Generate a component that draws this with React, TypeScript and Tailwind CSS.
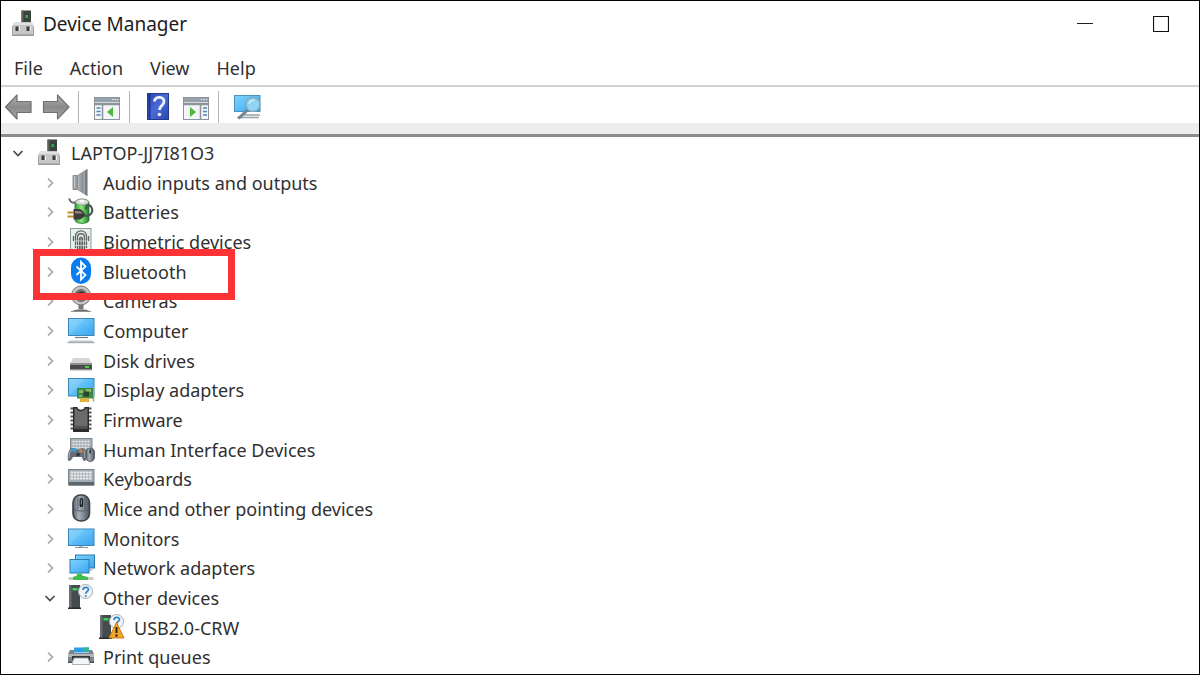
import { useState, type ReactNode } from "react";

function Icon({ children }: { children: ReactNode }) {
  return (
    <svg viewBox="0 0 28 28" className="size-7 shrink-0 overflow-visible" aria-hidden="true">
      {children}
    </svg>
  );
}

function Gradients() {
  return (
    <svg className="absolute size-0" aria-hidden="true">
      <defs>
        <linearGradient id="screen" x1="0" y1="0" x2="1" y2="1">
          <stop offset="0" stopColor="#7fd0fb" />
          <stop offset="0.5" stopColor="#5dbdf8" />
          <stop offset="1" stopColor="#36a3f0" />
        </linearGradient>
        <linearGradient id="cone" x1="0" y1="0" x2="1" y2="0">
          <stop offset="0" stopColor="#b4b9bd" />
          <stop offset="0.55" stopColor="#8c9196" />
          <stop offset="1" stopColor="#c3c7ca" />
        </linearGradient>
        <linearGradient id="arrow" x1="0" y1="0" x2="0" y2="1">
          <stop offset="0" stopColor="#b4b4b4" />
          <stop offset="0.5" stopColor="#8a8a8a" />
          <stop offset="1" stopColor="#a6a6a6" />
        </linearGradient>
        <linearGradient id="book" x1="0" y1="0" x2="1" y2="1">
          <stop offset="0" stopColor="#2a47b4" />
          <stop offset="0.5" stopColor="#4a6bd6" />
          <stop offset="1" stopColor="#2743ae" />
        </linearGradient>
        <linearGradient id="cell" x1="0" y1="0" x2="1" y2="0">
          <stop offset="0" stopColor="#2f9e35" />
          <stop offset="0.45" stopColor="#8be57c" />
          <stop offset="1" stopColor="#1c7d2a" />
        </linearGradient>
        <linearGradient id="mouse" x1="0" y1="0" x2="1" y2="0">
          <stop offset="0" stopColor="#56606b" />
          <stop offset="0.35" stopColor="#a6b1bc" />
          <stop offset="1" stopColor="#4d5660" />
        </linearGradient>
      </defs>
    </svg>
  );
}

function DeviceIcon() {
  return (
    <Icon>
      <rect x="12.5" y="0.5" width="9.5" height="12" fill="#3a423d" />
      <rect x="12.5" y="0.5" width="2" height="12" fill="#5c625e" />
      <rect x="16.5" y="5" width="2.5" height="3" fill="#2fae4b" />
      <path d="M5 12.5h18l2 4V26H3v-9.5z" fill="#c6c6c6" />
      <path d="M5 12.5h18l1 2.5H4z" fill="#e2e2e2" />
      <path d="M3 24.5h22V26H3z" fill="#999" />
      <path d="M3.5 16.5V25M24.5 16.5V25" stroke="#a4a4a4" />
      <rect x="6.5" y="16.5" width="3" height="4.500" fill="#3d3d3d" />
      <rect x="17.5" y="16.5" width="3" height="4.500" fill="#3d3d3d" />
      <path d="M10.5 16.5v4.5M21.5 16.5v4.5" stroke="#f2f2f2" />
    </Icon>
  );
}

function AudioIcon() {
  return (
    <Icon>
      <path d="M6 6.500h4.500v14H6z" fill="#9a9ea2" stroke="#74787b" strokeWidth="0.8" />
      <path d="M10.500 6.500 20 0.500v26L10.500 20.500z" fill="url(#cone)" stroke="#85898c" strokeWidth="0.8" />
      <path d="M18 1.800 20.500 0v27L18 25.200z" fill="#777c80" />
      <path d="M20.500 0v27" fill="none" stroke="#b6babd" strokeWidth="0.8" />
      <path d="M7.500 7.500v12" stroke="#c9cdd0" />
    </Icon>
  );
}

function BatteryIcon() {
  return (
    <Icon>
      <path d="M2 0.500c2 5 5 5 8 3" fill="none" stroke="#6b6175" strokeWidth="2" />
      <path d="M8 4.500C8 0 22 0 22 4.500V22c0 4.500-14 4.500-14 0z" fill="url(#cell)" stroke="#25702b" strokeWidth="0.8" />
      <ellipse cx="15" cy="4" rx="6.500" ry="3" fill="#d9ded9" stroke="#8a938b" strokeWidth="0.7" />
      <ellipse cx="15" cy="3" rx="2.500" ry="1.300" fill="#fafafa" />
      <path d="M16 17c8 3 11-4 8-8.500-2.500-3-6-.5-4.500 3" fill="none" stroke="#4e5654" strokeWidth="2.200" />
      <path d="M0.500 14.500h6M0.500 18.500h6" stroke="#c08c2b" strokeWidth="2.200" />
      <path d="M6.500 11h4c4 0 6 2 7.500 5.500-1.500 3.500-3.500 5-7.500 5h-4z" fill="#3d3a39" />
      <path d="M8 13h3c2.500 0 4 1 5 2.500H8z" fill="#8b8683" />
    </Icon>
  );
}

function FingerprintIcon() {
  return (
    <Icon>
      <rect x="3.500" y="0.500" width="20.500" height="26" fill="#e5eeee" stroke="#8b9b99" />
      <g fill="none" stroke="#5f6463" strokeWidth="1.300">
        <path d="M8.500 20V8.500C8.500 1 19.500 1 19.500 8.500V20" />
        <path d="M10.500 22V9.500c0-5 7-5 7 0V22" />
        <path d="M12.500 23V11c0-2.500 3-2.500 3 0v12" />
        <path d="M14 10v14" />
        <path d="M6.500 13V8" />
        <path d="M21.500 13V8" />
      </g>
      <path d="M7 13h14M7 17.500h14" stroke="#e5eeee" strokeWidth="0.7" />
    </Icon>
  );
}

function BluetoothIcon() {
  return (
    <Icon>
      <rect x="4" y="-0.500" width="20" height="26.500" rx="10" fill="#0a7cf2" />
      <path d="m9.500 8.500 9 8.500-4.500 4.500v-17.500l4.500 4.500-9 8.500" fill="none" stroke="#fff" strokeWidth="1.800" />
    </Icon>
  );
}

function CameraIcon() {
  return (
    <Icon>
      <path d="M11.500 17h5v5h-5z" fill="#777" />
      <path d="M5 24.500c3-3 15-3 18 0z" fill="#6e6e6e" />
      <path d="M4 24.500h20" stroke="#8f8f8f" />
      <circle cx="14" cy="8.500" r="9.500" fill="#c5c5c5" stroke="#777" />
      <circle cx="14" cy="8.500" r="6.500" fill="#737378" />
      <circle cx="14" cy="8.500" r="4" fill="#303038" />
      <circle cx="12.500" cy="7" r="1.200" fill="#9ab" />
    </Icon>
  );
}

function ComputerIcon() {
  return (
    <Icon>
      <rect x="1.500" y="1.500" width="25.500" height="17" fill="url(#screen)" stroke="#3b87b8" />
      <path d="M2 18V2h16z" fill="#fff" opacity="0.12" />
      <path d="M8 20.500h13" stroke="#6e7c88" strokeWidth="1.200" />
      <path d="M2.500 23.500h23l2 2.200H0.500z" fill="#bfc4c8" />
      <path d="M0.500 25.700h27" stroke="#8e959b" strokeWidth="0.8" />
    </Icon>
  );
}

function DiskIcon() {
  return (
    <Icon>
      <path d="M6 11h16l3 6H3z" fill="#d5d5d5" />
      <path d="M3 16.500h22V23H3z" fill="#4a4a4a" />
      <path d="M3 16.500h22v1.500H3z" fill="#8f8f8f" />
      <path d="M3 22.200h22v1.300H3z" fill="#a5a5a5" />
      <rect x="18" y="19" width="4" height="2" fill="#3fd83a" />
    </Icon>
  );
}

function DisplayIcon() {
  return (
    <Icon>
      <rect x="1.500" y="2.500" width="25.500" height="17.500" fill="url(#screen)" stroke="#3b87b8" />
      <path d="M2 19.500V3h16z" fill="#fff" opacity="0.12" />
      <path d="M26.500 10v15.500" stroke="#9aa0a3" strokeWidth="1.500" />
      <path d="M10 12h16v10.500H10z" fill="#3d8a45" />
      <path d="M12 14h4v3h-4zM19 13h5v3h-5zM12 19h3v2h-3z" fill="#8bb765" />
      <path d="M16.500 15.500h5.500v5h-5.500z" fill="#26472c" />
      <path d="M13 22.500h9V26h-9z" fill="#e2a925" />
      <path d="M15.500 22.500V26M18 22.500V26M20 22.500V26" stroke="#f5cf6b" strokeWidth="0.6" />
    </Icon>
  );
}

function FirmwareIcon() {
  return (
    <Icon>
      <path d="M3.500 2.500h4M3.500 6.500h4M3.500 10.500h4M3.500 14.500h4M3.500 18.500h4M3.500 22.500h4M20.500 2.500h4M20.500 6.500h4M20.500 10.500h4M20.500 14.500h4M20.500 18.500h4M20.500 22.500h4" stroke="#555" strokeWidth="2.200" />
      <path d="M6 1h4.500c0 3.500 7 3.500 7 0H22v25H6z" fill="#2c2c2c" />
      <path d="M7.500 2.500h2c1.500 3.500 7.500 3.500 9 0h2V22h-13z" fill="#6b6b6b" />
      <path d="M7.500 20h13v3h-13z" fill="#505050" />
    </Icon>
  );
}

function HidIcon() {
  return (
    <Icon>
      <rect x="3.500" y="2.500" width="21.500" height="12.500" fill="#a7b0b5" stroke="#7f8a91" />
      <path d="M5.500 5.500h17.500M5.500 8.500h17.500M5.500 11.500h17.500" stroke="#e9edef" strokeWidth="1.600" strokeDasharray="2 1" />
      <path d="M1 24c-1-5 1-12 4-12l3 1.500h4l3-1.500c4 0 5 7 4 12-1 2-3 1.500-4-3H6c-2 4-4 5-5 3z" fill="#676e75" />
      <path d="M2 22c0-4 1-8 3-8M17 15c1 2 1 5 1 7" fill="none" stroke="#b4bbc1" />
      <circle cx="7" cy="14" r="2.200" fill="#359bdf" />
      <circle cx="14" cy="15" r="1.800" fill="#c98656" />
      <circle cx="11" cy="18.500" r="1.800" fill="#303439" />
      <rect x="19" y="12" width="8.500" height="13.500" rx="4.200" fill="url(#mouse)" stroke="#414950" strokeWidth="0.8" />
      <path d="M23.200 13.500v4" stroke="#2b3137" strokeWidth="1.500" />
    </Icon>
  );
}

function KeyboardIcon() {
  return (
    <Icon>
      <rect x="1.500" y="4.500" width="25.500" height="15.500" fill="#a5acb1" stroke="#79838a" />
      <path d="M3.500 7.500h21.500M3.500 10.500h21.500M3.500 13.500h21.500" stroke="#e9ecee" strokeWidth="2" strokeDasharray="2.500 0.600" />
      <path d="M2 17h25v3.500H2z" fill="#5d666d" />
    </Icon>
  );
}

function MouseIcon() {
  return (
    <Icon>
      <rect x="6" y="0" width="16.500" height="26" rx="7.500" fill="url(#mouse)" stroke="#3b4148" strokeWidth="1.600" />
      <path d="M7 14.500c5 2 10 2 15 0M11 2v12M18 2v12" fill="none" stroke="#555e67" />
      <rect x="12.600" y="3" width="3.500" height="9" rx="1.500" fill="#20252a" />
      <path d="M14.300 4.500v5" stroke="#8593a0" />
    </Icon>
  );
}

function MonitorIcon() {
  return (
    <Icon>
      <rect x="1.500" y="4" width="25.500" height="16.500" fill="url(#screen)" stroke="#3b87b8" />
      <path d="M2 20V4.500h16z" fill="#fff" opacity="0.12" />
      <path d="M12 21h4v1h-4z" fill="#aab4bb" />
      <path d="M8 22.500h13" stroke="#8a959d" />
    </Icon>
  );
}

function NetworkIcon() {
  return (
    <Icon>
      <rect x="8.500" y="1" width="19" height="13" fill="url(#screen)" stroke="#2f7cac" />
      <path d="M22.500 16h3" stroke="#8a959d" />
      <rect x="3" y="5.500" width="19" height="13.500" fill="url(#screen)" stroke="#2f7cac" />
      <path d="M1.500 24.500h25" stroke="#c6cbc8" strokeWidth="3" />
      <path d="M10 19.500h5v2l6 1.500v3H6v-3l4-1.500z" fill="#41bd4c" />
    </Icon>
  );
}

function Tower() {
  return (
    <>
      <path d="M2 1h11v23H2z" fill="#454a4c" />
      <path d="M2 1h2.500v23H2z" fill="#676d70" />
      <path d="M1 23.500h13V25H1z" fill="#282b2d" />
      <rect x="5.500" y="4" width="5" height="2.500" fill="#39d353" />
    </>
  );
}

function QuestionBadge() {
  return (
    <>
      <circle cx="18.500" cy="7.500" r="7" fill="#f1f5f8" stroke="#a4afb8" />
      <path d="M16 6c0-3.500 5.500-3.500 5.500-.5 0 2-2.800 2-2.800 4.200" fill="none" stroke="#3280c8" strokeWidth="1.700" />
      <circle cx="18.700" cy="12" r="1" fill="#3280c8" />
    </>
  );
}

function UnknownIcon() {
  return (
    <Icon>
      <Tower />
      <QuestionBadge />
    </Icon>
  );
}

function WarningIcon() {
  return (
    <Icon>
      <Tower />
      <QuestionBadge />
      <path d="M18.500 8.500 26 24H11z" fill="#f4a62a" stroke="#c77a17" strokeLinejoin="round" />
      <path d="M18.500 13v6" stroke="#33240f" strokeWidth="2" />
      <circle cx="18.500" cy="21.500" r="1.200" fill="#33240f" />
    </Icon>
  );
}

function PrinterIcon() {
  return (
    <Icon>
      <path d="M7 4.500h15v5H7z" fill="#2f9be8" />
      <path d="M16 4.500h6v4h-6z" fill="#35b98b" />
      <path d="M3 7h4v3h15V7h3l2 4v9H1v-9z" fill="#808488" />
      <path d="M1 11h26v3H1z" fill="#b3b7ba" />
      <path d="M5 13h18v4H5z" fill="#34373a" />
      <path d="M7 15h14l2 6.500H5z" fill="#f4f6f7" stroke="#9ca2a6" strokeWidth="0.8" />
      <path d="M1 18.500h4V20H1zM23 18.500h4V20h-4z" fill="#4b4f52" />
    </Icon>
  );
}

function ArrowIcon({ right = false }: { right?: boolean }) {
  return (
    <Icon>
      <path
        d={right ? "M27 14 15.500 2v6.500H1.500v11h14V26z" : "M1.500 14 13 2v6.500h14v11H13V26z"}
        fill="url(#arrow)"
        stroke="#717171"
        strokeWidth="1.200"
        strokeLinejoin="round"
      />
    </Icon>
  );
}

function PanelIcon({ right = false }: { right?: boolean }) {
  return (
    <Icon>
      <rect x="1.500" y="4.500" width="25" height="22" fill="#f3f5f6" stroke="#8b939b" />
      <path d="M2 5h24v4H2z" fill="#98a2ad" />
      <path d="M19 6.500h6" stroke="#e8ecef" strokeDasharray="1.500 1" />
      <path d="M2 11h24" stroke="#8b939b" strokeWidth="2.500" />
      {right ? (
        <>
          <path d="M18.500 12v14" stroke="#8b939b" strokeWidth="1.500" />
          <path d="M21 15h4M21 18.500h4M21 22h4" stroke="#4a86c0" strokeWidth="1.300" />
          <path d="m8 14 6 5-6 5z" fill="#4cb83a" />
        </>
      ) : (
        <>
          <path d="M9.500 12v14" stroke="#8b939b" strokeWidth="1.500" />
          <path d="M3.500 15h4M3.500 18.500h4M3.500 22h4" stroke="#4a86c0" strokeWidth="1.300" />
          <path d="m20 14-6 5 6 5z" fill="#4cb83a" />
        </>
      )}
    </Icon>
  );
}

function HelpIcon() {
  return (
    <Icon>
      <rect x="3.500" y="0.500" width="21" height="26" fill="url(#book)" stroke="#243a8f" />
      <path d="M5.500 1v25" stroke="#1f3690" strokeWidth="2" />
      <path d="M10.500 8.500c0-5.500 9.500-5.500 9.500 0 0 4-4.500 4-4.500 8.500" fill="none" stroke="#f0f3fc" strokeWidth="2.800" />
      <circle cx="15.400" cy="21.500" r="1.800" fill="#f0f3fc" />
    </Icon>
  );
}

function ScanIcon() {
  return (
    <Icon>
      <rect x="1.500" y="2.500" width="25.500" height="16" fill="url(#screen)" stroke="#4b93bd" />
      <path d="M8 22h19M4 24.500h22" stroke="#96a1a8" strokeWidth="1.300" />
      <path d="m14.500 17-9 8.500" stroke="#73828c" strokeWidth="3" />
      <circle cx="20" cy="11.500" r="7" fill="#92d4f2" stroke="#7fa9bd" strokeWidth="1.400" />
      <path d="M16 11c.5-3 3-4 5-3.500" fill="none" stroke="#d7f1fc" strokeWidth="1.300" />
    </Icon>
  );
}

type Device = { name: string; icon: () => ReactNode; open?: boolean; leaf?: boolean; marked?: boolean };

const devices: Device[] = [
  { name: "Audio inputs and outputs", icon: AudioIcon },
  { name: "Batteries", icon: BatteryIcon },
  { name: "Biometric devices", icon: FingerprintIcon },
  { name: "Bluetooth", icon: BluetoothIcon, marked: true },
  { name: "Cameras", icon: CameraIcon },
  { name: "Computer", icon: ComputerIcon },
  { name: "Disk drives", icon: DiskIcon },
  { name: "Display adapters", icon: DisplayIcon },
  { name: "Firmware", icon: FirmwareIcon },
  { name: "Human Interface Devices", icon: HidIcon },
  { name: "Keyboards", icon: KeyboardIcon },
  { name: "Mice and other pointing devices", icon: MouseIcon },
  { name: "Monitors", icon: MonitorIcon },
  { name: "Network adapters", icon: NetworkIcon },
  { name: "Other devices", icon: UnknownIcon, open: true },
  { name: "USB2.0-CRW", icon: WarningIcon, leaf: true },
  { name: "Print queues", icon: PrinterIcon },
];

function Chevron({ open, name, onClick }: { open: boolean; name: string; onClick?: () => void }) {
  return (
    <button
      type="button"
      onClick={onClick}
      aria-expanded={open}
      aria-label={name}
      className="flex size-6 shrink-0 items-center justify-center"
    >
      <svg viewBox="0 0 12 12" className="size-3" fill="none" strokeWidth="1.7" aria-hidden="true">
        {open ? <path d="m1.500 4 4.500 4.500L10.500 4" stroke="#4a4a4a" /> : <path d="M4 1.500 8.500 6 4 10.500" stroke="#a8a8a8" />}
      </svg>
    </button>
  );
}

function DeviceRow({ device }: { device: Device }) {
  const [open, setOpen] = useState(Boolean(device.open));
  const Picture = device.icon;
  return (
    <li
      role="treeitem"
      aria-level={device.leaf ? 3 : 2}
      className={`relative flex min-h-7 flex-1 items-center ${device.leaf ? "pl-17" : "pl-[37px]"}`}
    >
      {device.leaf ? <span className="w-6 shrink-0" /> : <Chevron open={open} name={device.name} onClick={() => setOpen(!open)} />}
      <span className="ml-[5px] flex items-center gap-2">
        <Picture />
        <span>{device.name}</span>
      </span>
      {device.marked && (
        <span className="absolute -top-2 left-8 z-10 h-[51px] w-[202px] border-[7px] border-[#fb3334]" aria-hidden="true" />
      )}
    </li>
  );
}

function Separator() {
  return <span className="mr-3.5 ml-2 h-8 w-px bg-[#b5b5b5]" />;
}

export default function App() {
  return (
    <div className="flex min-h-screen flex-col overflow-hidden border border-black bg-white font-['Noto_Sans','Open_Sans',sans-serif] text-[18px] leading-6 text-[#303030]">
      <Gradients />
      <header className="flex h-[46px] items-center pl-2">
        <DeviceIcon />
        <h1 className="ml-1.5 flex-1 text-[19px] text-[#1c1c1c]">Device Manager</h1>
        <button type="button" aria-label="Minimize" className="flex h-full w-[76px] items-center justify-center">
          <svg viewBox="0 0 16 16" className="size-4" aria-hidden="true">
            <path d="M0 7.500h16" stroke="#222" />
          </svg>
        </button>
        <button type="button" aria-label="Maximize" className="flex h-full w-[76px] items-center justify-center">
          <svg viewBox="0 0 16 16" className="size-4" aria-hidden="true">
            <path d="M.5.500h15v15H.5z" fill="none" stroke="#111" strokeWidth="1.200" />
          </svg>
        </button>
      </header>
      <nav className="flex h-10 items-center gap-[27px] border-b-2 border-[#d2d2d2] pt-1 pl-[13px]" aria-label="Menu bar">
        <button type="button">File</button>
        <button type="button">Action</button>
        <button type="button">View</button>
        <button type="button">Help</button>
      </nav>
      <div role="toolbar" aria-label="Tools" className="flex h-9 items-center pt-1 pl-[3px]">
        <button type="button" aria-label="Back">
          <ArrowIcon />
        </button>
        <button type="button" aria-label="Forward" className="ml-2.5">
          <ArrowIcon right />
        </button>
        <Separator />
        <button type="button" aria-label="Show or hide console tree">
          <PanelIcon />
        </button>
        <Separator />
        <button type="button" aria-label="Help">
          <HelpIcon />
        </button>
        <button type="button" aria-label="Show or hide action pane" className="ml-2.5">
          <PanelIcon right />
        </button>
        <Separator />
        <button type="button" aria-label="Scan for hardware changes">
          <ScanIcon />
        </button>
      </div>
      <div className="h-3.5 border-b-3 border-[#8a8a8a] bg-[#ededed]" />
      <ul role="tree" aria-label="Devices" className="flex flex-1 flex-col pt-px pb-0.5">
        <li role="treeitem" aria-level={1} className="flex min-h-7 flex-1 items-center pl-[5px]">
          <Chevron open name="LAPTOP-JJ7I81O3" />
          <span className="ml-[5px] flex items-center gap-2">
            <DeviceIcon />
            <span>LAPTOP-JJ7I81O3</span>
          </span>
        </li>
        {devices.map((device) => (
          <DeviceRow key={device.name} device={device} />
        ))}
      </ul>
    </div>
  );
}
